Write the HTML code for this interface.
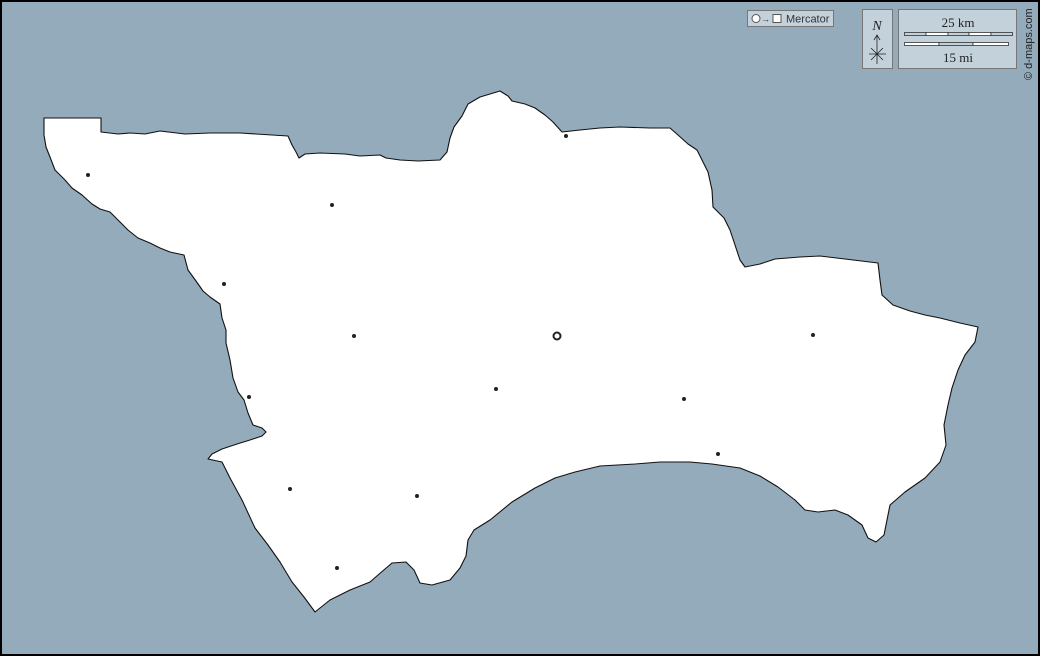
<!DOCTYPE html>
<html><head><meta charset="utf-8"><style>
html,body{margin:0;padding:0;width:1040px;height:656px;overflow:hidden;background:#94abbb}
</style></head><body>
<svg width="1040" height="656" viewBox="0 0 1040 656" xmlns="http://www.w3.org/2000/svg" style="display:block">
<rect x="0" y="0" width="1040" height="656" fill="#94abbb"/>
<polygon fill="#fff" stroke="#111" stroke-width="1.1" stroke-linejoin="round" points="
44,118 101,118 101,132 118,134 130,133 145,134 160,131 185,134 210,133 240,133 288,136 292,145 296,152 299,158 305,154 320,153 345,154 360,156 380,155 386,158 400,160 418,161 440,160 447,152 450,138 454,127 462,116 468,104 480,97 500,91 508,96 512,101 525,104 535,108 545,115 553,122 562,132 580,130 600,128 620,127 650,128 670,128 678,135 688,144 697,150 702,160 708,172 712,190 713,207 724,218 730,230 735,245 740,260 745,267 760,264 775,259 800,257 820,256 845,259 878,263 880,280 882,295 893,305 910,311 925,315 940,318 960,323 978,327 975,342 965,355 958,370 952,388 948,405 944,425 946,445 940,462 925,478 905,492 890,505 887,520 884,535 876,542 868,538 862,525 848,515 835,510 818,512 805,510 795,500 778,487 760,476 740,468 712,464 690,462 660,462 635,464 600,466 575,472 555,478 535,488 512,502 490,520 474,530 468,540 466,556 460,568 450,580 432,585 420,583 414,570 406,562 392,563 378,575 370,582 350,590 330,600 315,612 304,597 292,582 280,562 268,545 255,528 242,500 230,478 222,462 208,459 212,454 222,449 237,444 250,440 262,436 266,432 262,428 253,425 248,413 244,400 238,392 233,378 230,360 226,343 226,330 222,318 220,304 210,297 203,291 196,281 188,270 184,255 170,252 160,248 150,243 138,238 128,230 118,220 110,212 100,209 92,204 82,195 72,188 65,180 55,170 50,157 46,147 44,135"/>
<g fill="#222">
<circle cx="88" cy="175" r="2"/><circle cx="332" cy="205" r="2"/><circle cx="566" cy="136" r="2"/>
<circle cx="224" cy="284" r="2"/><circle cx="354" cy="336" r="2"/><circle cx="249" cy="397" r="2"/>
<circle cx="496" cy="389" r="2"/><circle cx="684" cy="399" r="2"/><circle cx="813" cy="335" r="2"/>
<circle cx="718" cy="454" r="2"/><circle cx="290" cy="489" r="2"/><circle cx="417" cy="496" r="2"/>
<circle cx="337" cy="568" r="2"/>
</g>
<circle cx="557" cy="336" r="3.5" fill="none" stroke="#222" stroke-width="2"/>
<rect x="747.5" y="10.5" width="86" height="16" fill="#c3d1db" stroke="#777"/>
<circle cx="756" cy="18.5" r="4" fill="#fff" stroke="#555"/>
<text x="761" y="22" font-family="Liberation Sans, sans-serif" font-size="9" fill="#333">→</text>
<rect x="773" y="14.5" width="8" height="8" fill="#fff" stroke="#555"/>
<text x="786" y="22.5" font-family="Liberation Sans, sans-serif" font-size="11" fill="#333">Mercator</text>
<rect x="862.5" y="9.5" width="30" height="59" fill="#c3d1db" stroke="#777"/>
<text x="877" y="30" text-anchor="middle" font-family="Liberation Serif, serif" font-style="italic" font-size="14" fill="#222">N</text>
<path d="M877 36 L877 64 M874 40 L877 35 L880 40 M869 54 L886 54 M871 48 L883 60 M883 48 L871 60" stroke="#222" stroke-width="0.8" fill="none"/>
<rect x="898.5" y="9.5" width="118" height="59" fill="#c3d1db" stroke="#777"/>
<text x="958" y="27" text-anchor="middle" font-family="Liberation Serif, serif" font-size="13" fill="#222">25 km</text>
<g stroke="#333" stroke-width="0.8">
<rect x="904.5" y="32.5" width="21.5" height="3" fill="#c3d1db"/>
<rect x="926" y="32.5" width="22" height="3" fill="#fff"/>
<rect x="948" y="32.5" width="21" height="3" fill="#c3d1db"/>
<rect x="969" y="32.5" width="22" height="3" fill="#fff"/>
<rect x="991" y="32.5" width="21.5" height="3" fill="#c3d1db"/>
<rect x="904.5" y="42.5" width="34.5" height="3" fill="#fff"/>
<rect x="939" y="42.5" width="34" height="3" fill="#c3d1db"/>
<rect x="973" y="42.5" width="35.5" height="3" fill="#fff"/>
</g>
<text x="958" y="62" text-anchor="middle" font-family="Liberation Serif, serif" font-size="13" fill="#222">15 mi</text>
<text transform="translate(1032,80) rotate(-90)" font-family="Liberation Sans, sans-serif" font-size="11" fill="#222">© d-maps.com</text>
<rect x="1" y="1" width="1038" height="654" fill="none" stroke="#000" stroke-width="2"/>
</svg>
</body></html>
